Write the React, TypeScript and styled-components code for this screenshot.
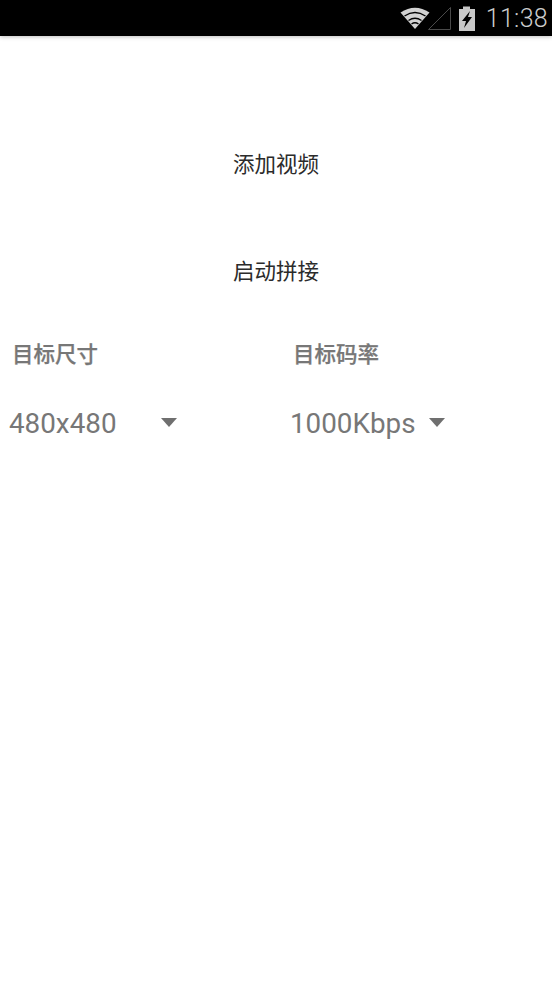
import { createGlobalStyle } from "styled-components";
import styled from "styled-components";

const GlobalStyle = createGlobalStyle`
    html, body {
        margin: 0;
        padding: 0;
        background: #ffffff;
    }
    body {
        font-family: "Roboto", "Noto Sans CJK SC", sans-serif;
    }
`

const Screen = styled.div`
    width: 552px;
    height: 986px;
    overflow: hidden;
    background: #ffffff;
`

const StatusBar = styled.div`
    height: 36px;
    background: #000000;
    display: flex;
    align-items: center;
    justify-content: flex-end;
    padding-right: 4px;
    box-shadow: 0 1px 4px rgba(0, 0, 0, 0.25);
`

const Clock = styled.span`
    font-size: 25px;
    color: #cccccc;
    margin-left: 10px;
    font-weight: 300;
    letter-spacing: 0.3px;
`

const StatusIcon = styled.svg<{ $gap?: number }>`
    display: block;
    margin-left: ${(p) => p.$gap ?? 0}px;
`

const ActionArea = styled.div`
    display: flex;
    flex-direction: column;
    align-items: center;
    padding-top: 118px;
    gap: 85px;
`

const ActionButton = styled.div`
    height: 22px;
    line-height: 22px;
    font-size: 21.5px;
    color: #2b2b2b;
`

const Options = styled.div`
    display: flex;
    margin-top: 60px;
`

const OptionColumn = styled.div<{ $width: number; $inset: number }>`
    width: ${(p) => p.$width}px;
    padding-left: ${(p) => p.$inset}px;
    box-sizing: border-box;
`

const OptionLabel = styled.div`
    height: 24px;
    line-height: 24px;
    font-size: 21.5px;
    font-weight: 500;
    color: #777777;
    padding-left: 4px;
    -webkit-text-stroke: 0.25px #777777;
`

const Select = styled.div`
    display: flex;
    align-items: center;
    margin-top: 40px;
    height: 32px;
`

const SelectValue = styled.span<{ $width: number }>`
    width: ${(p) => p.$width}px;
    font-size: 27.8px;
    color: #777777;
    padding-left: 1px;
    box-sizing: border-box;
`

const Caret = styled.span`
    width: 0;
    height: 0;
    border-left: 8px solid transparent;
    border-right: 8px solid transparent;
    border-top: 9px solid #6f6f6f;
    margin-top: -2px;
`

const App = () => {
    return (
        <Screen>
            <GlobalStyle />
            <StatusBar>
                <StatusIcon width="30" height="24" viewBox="0 0 30 24">
                    <path d="M15 23 L0.5 6.5 Q15 -3 29.5 6.5 Z" fill="#d2d2d2" />
                    <path d="M4.5 10 Q15 3 25.5 10 M8.5 14.5 Q15 10 21.5 14.5 M11.5 18 Q15 15.5 18.5 18" stroke="#000" strokeWidth="1.3" fill="none" />
                </StatusIcon>
                <StatusIcon $gap={-2} width="23" height="24" viewBox="0 0 23 24">
                    <path d="M0.5 23.5 L22.5 1.5 L22.5 23.5 Z" fill="none" stroke="#4a4a4a" strokeWidth="1" />
                </StatusIcon>
                <StatusIcon $gap={7} width="18" height="25" viewBox="0 0 18 25">
                    <path d="M5 0.5 H12 V3 H17 V25 H1 V3 H5 Z" fill="#c8c8c8" />
                    <path d="M12 5 L4 15 H8 L6 22 L14 11 H10 Z" fill="#000" />
                </StatusIcon>
                <Clock>11:38</Clock>
            </StatusBar>
            <ActionArea>
                <ActionButton>添加视频</ActionButton>
                <ActionButton>启动拼接</ActionButton>
            </ActionArea>
            <Options>
                <OptionColumn $width={289} $inset={8}>
                    <OptionLabel>目标尺寸</OptionLabel>
                    <Select>
                        <SelectValue $width={153}>480x480</SelectValue>
                        <Caret />
                    </Select>
                </OptionColumn>
                <OptionColumn $width={263} $inset={0}>
                    <OptionLabel>目标码率</OptionLabel>
                    <Select>
                        <SelectValue $width={140}>1000Kbps</SelectValue>
                        <Caret />
                    </Select>
                </OptionColumn>
            </Options>
        </Screen>
    )
}

export default App;
